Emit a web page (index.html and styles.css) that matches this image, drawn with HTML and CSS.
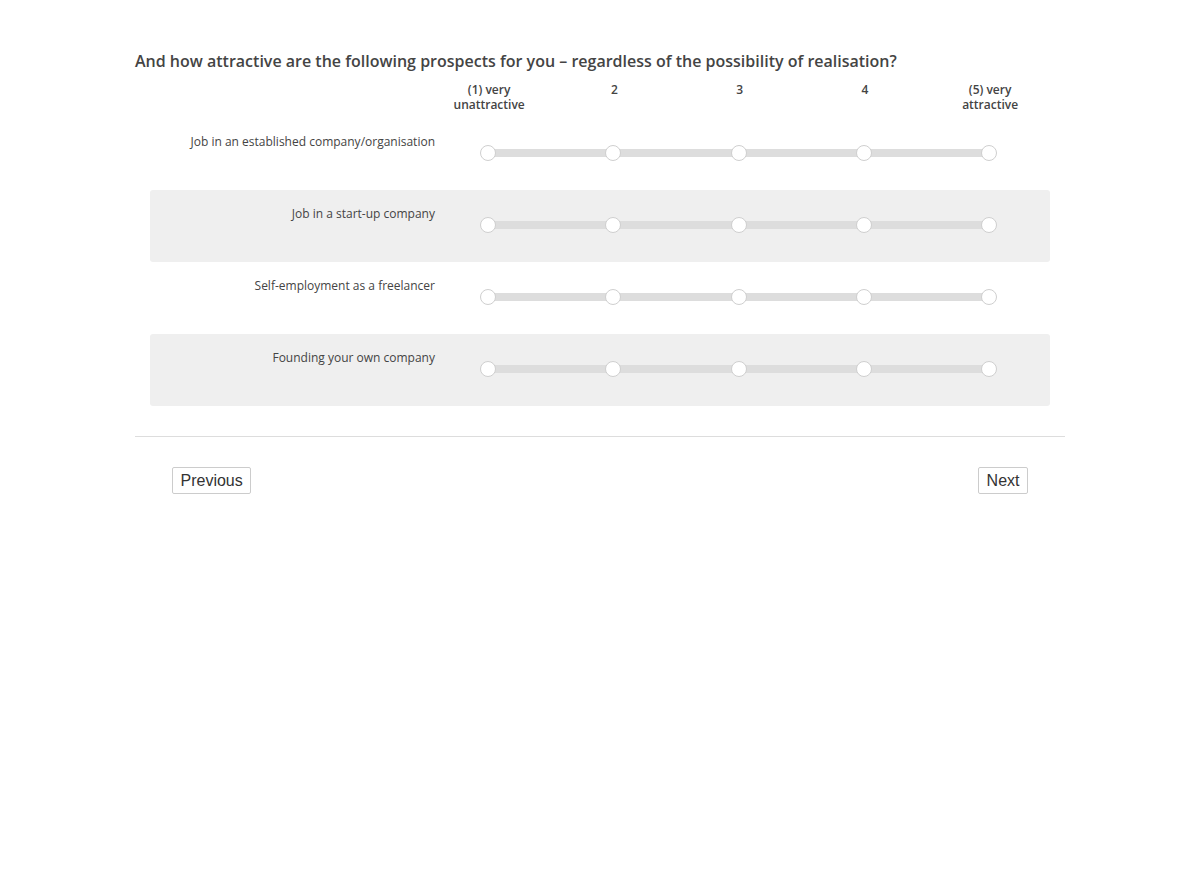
FILE: index.html
```html
<!DOCTYPE html>
<html lang="en">
<head>
<meta charset="utf-8">
<title>Survey</title>
<link rel="stylesheet" href="styles.css">
</head>
<body>
<div class="page">
  <h1 class="question">And how attractive are the following prospects for you – regardless of the possibility of realisation?</h1>
  <div class="matrix">
    <div class="scale-head">
      <div class="spacer"></div>
      <div class="col">(1) very<br>unattractive</div>
      <div class="col">2</div>
      <div class="col">3</div>
      <div class="col">4</div>
      <div class="col">(5) very<br>attractive</div>
    </div>
    <div class="item">
      <div class="item-label">Job in an established company/organisation</div>
      <div class="slider"><span class="knob"></span><span class="knob"></span><span class="knob"></span><span class="knob"></span><span class="knob"></span></div>
    </div>
    <div class="item alt">
      <div class="item-label">Job in a start-up company</div>
      <div class="slider"><span class="knob"></span><span class="knob"></span><span class="knob"></span><span class="knob"></span><span class="knob"></span></div>
    </div>
    <div class="item">
      <div class="item-label">Self-employment as a freelancer</div>
      <div class="slider"><span class="knob"></span><span class="knob"></span><span class="knob"></span><span class="knob"></span><span class="knob"></span></div>
    </div>
    <div class="item alt">
      <div class="item-label">Founding your own company</div>
      <div class="slider"><span class="knob"></span><span class="knob"></span><span class="knob"></span><span class="knob"></span><span class="knob"></span></div>
    </div>
  </div>
  <hr class="divider">
  <div class="nav">
    <button class="btn">Previous</button>
    <button class="btn">Next</button>
  </div>
</div>
</body>
</html>
```

FILE: styles.css
```css
html, body {
  margin: 0;
  padding: 0;
  background: #fff;
}
body {
  font-family: "Open Sans", "DejaVu Sans", sans-serif;
  color: #444;
}
.page {
  width: 930px;
  margin: 0 auto;
  padding-top: 50px;
}
.question {
  margin: 0;
  font-size: 16px;
  line-height: 22px;
  font-weight: 600;
  color: #444;
}
.matrix {
  margin: 10px 15px 0;
}
.scale-head {
  display: grid;
  grid-template-columns: 276.5px repeat(5, 125.25px);
  font-size: 12px;
  line-height: 15px;
  font-weight: 600;
  color: #444;
  height: 30px;
  margin-bottom: 6px;
}
.scale-head .col {
  text-align: center;
}
.item {
  display: flex;
  height: 72px;
  border-radius: 3px;
}
.item.alt {
  background: #efefef;
}
.item-label {
  width: 285px;
  text-align: right;
  font-size: 12px;
  line-height: 18px;
  padding-top: 15px;
  color: #444;
}
.slider {
  margin-left: 45px;
  margin-top: 27px;
  width: 517px;
  height: 16px;
  display: flex;
  justify-content: space-between;
  background: linear-gradient(#dddddd, #dddddd) center / calc(100% - 16px) 8px no-repeat;
}
.knob {
  width: 16px;
  height: 16px;
  box-sizing: border-box;
  border: 1px solid #cfcfcf;
  border-radius: 50%;
  background: #fff;
}
.divider {
  margin: 30px 0 0;
  border: 0;
  border-top: 1px solid #dddddd;
  height: 0;
}
.nav {
  display: flex;
  justify-content: space-between;
  padding: 30px 37px 0;
}
.btn {
  font-family: "Liberation Sans", Arial, sans-serif;
  font-size: 16px;
  height: 27px;
  line-height: 25px;
  padding: 0 7.5px;
  border: 1px solid #cccccc;
  border-radius: 2px;
  background: #fff;
  color: #333;
}
```
